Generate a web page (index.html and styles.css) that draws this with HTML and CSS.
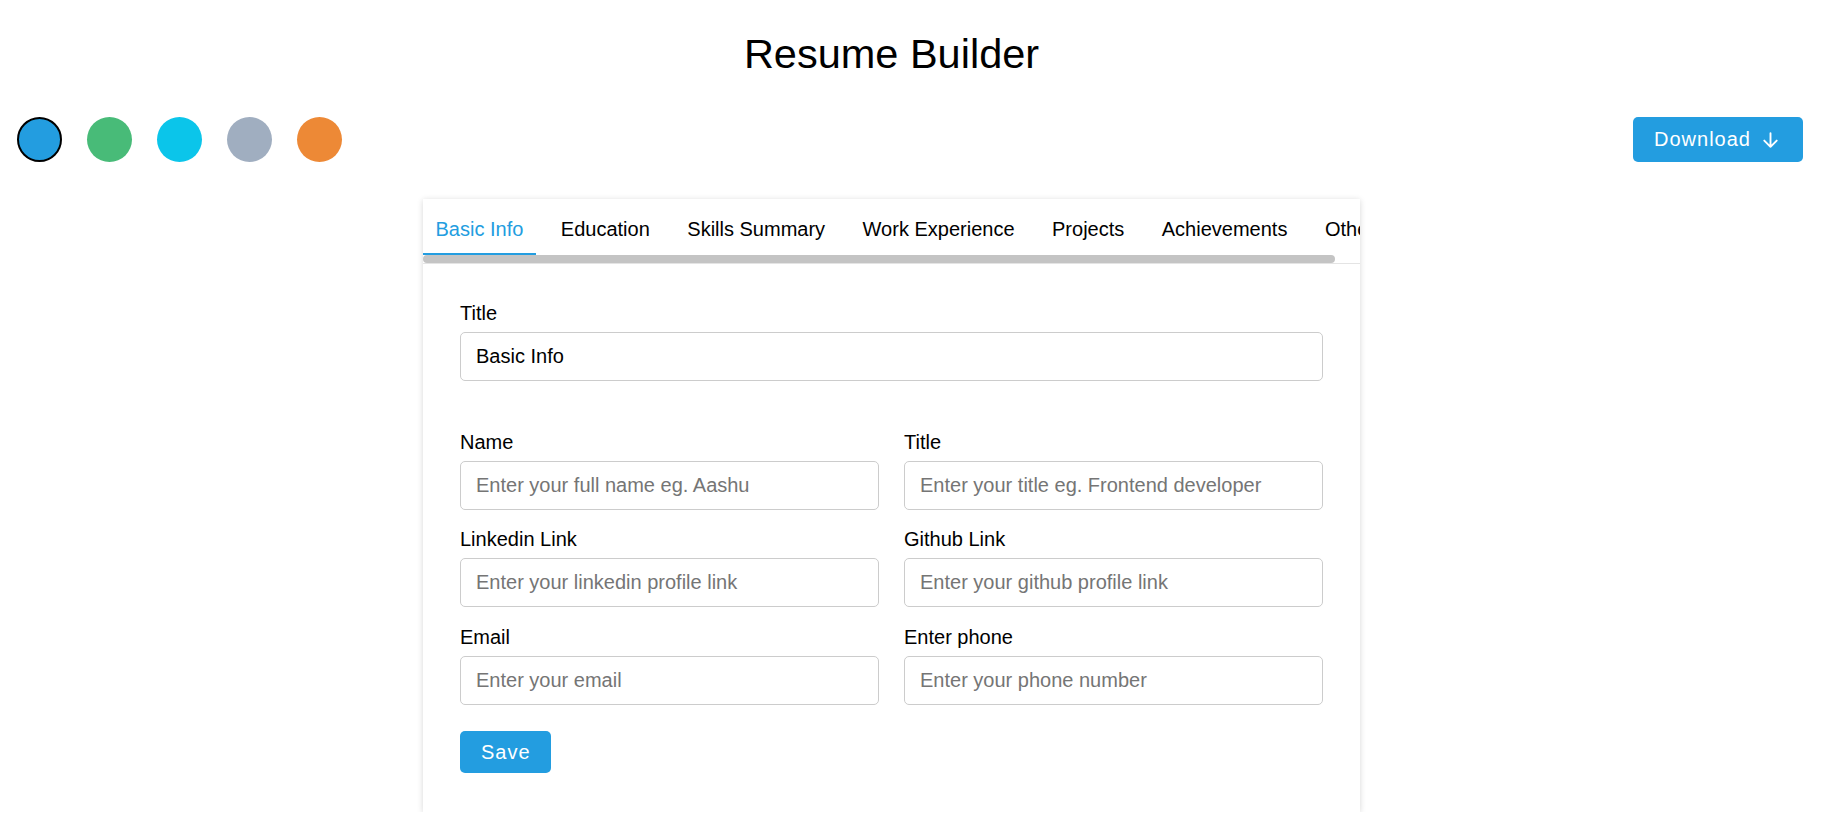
FILE: index.html
```html
<!DOCTYPE html>
<html lang="en">
<head>
<meta charset="utf-8">
<title>Resume Builder</title>
<link rel="stylesheet" href="styles.css">
</head>
<body>
  <h1 class="page-title">Resume Builder</h1>

  <div class="toolbar">
    <div class="swatches">
      <span class="swatch swatch-blue selected"></span>
      <span class="swatch swatch-green"></span>
      <span class="swatch swatch-cyan"></span>
      <span class="swatch swatch-gray"></span>
      <span class="swatch swatch-orange"></span>
    </div>
    <button class="btn btn-download">
      <span>Download</span>
      <svg class="arrow" width="17" height="16" viewBox="0 0 17 16" aria-hidden="true">
        <path d="M8.5 1.2 V14.8 M2.3 8.6 L8.5 14.8 L14.7 8.6" fill="none" stroke="#fff" stroke-width="1.9" stroke-linecap="round" stroke-linejoin="round"/>
      </svg>
    </button>
  </div>

  <div class="card">
    <div class="tabs">
      <div class="tab-list">
        <div class="tab active">Basic Info</div>
        <div class="tab">Education</div>
        <div class="tab">Skills Summary</div>
        <div class="tab">Work Experience</div>
        <div class="tab">Projects</div>
        <div class="tab">Achievements</div>
        <div class="tab">Others</div>
      </div>
      <div class="scroll-track">
        <div class="scroll-thumb"></div>
      </div>
    </div>

    <div class="panel">
      <div class="field section-title">
        <label class="label">Title</label>
        <input class="input" type="text" value="Basic Info">
      </div>

      <div class="grid">
        <div class="field">
          <label class="label">Name</label>
          <input class="input" type="text" placeholder="Enter your full name eg. Aashu">
        </div>
        <div class="field">
          <label class="label">Title</label>
          <input class="input" type="text" placeholder="Enter your title eg. Frontend developer">
        </div>
        <div class="field">
          <label class="label">Linkedin Link</label>
          <input class="input" type="text" placeholder="Enter your linkedin profile link">
        </div>
        <div class="field">
          <label class="label">Github Link</label>
          <input class="input" type="text" placeholder="Enter your github profile link">
        </div>
        <div class="field">
          <label class="label">Email</label>
          <input class="input" type="text" placeholder="Enter your email">
        </div>
        <div class="field">
          <label class="label">Enter phone</label>
          <input class="input" type="text" placeholder="Enter your phone number">
        </div>
      </div>

      <button class="btn btn-save">Save</button>
    </div>
  </div>
</body>
</html>
```

FILE: styles.css
```css
* {
  box-sizing: border-box;
}

html, body {
  margin: 0;
  padding: 0;
  background: #ffffff;
}

body {
  font-family: "Liberation Sans", Arial, sans-serif;
  color: #000000;
}

.page-title {
  margin: 0;
  padding: 31px 45px 0 0;
  font-size: 41.5px;
  line-height: 46px;
  font-weight: 400;
  text-align: center;
}

.toolbar {
  display: flex;
  justify-content: space-between;
  align-items: center;
  margin-top: 40px;
  padding: 0 25px 0 17px;
  height: 45px;
}

.swatches {
  display: flex;
  gap: 25px;
}

.swatch {
  display: block;
  width: 45px;
  height: 45px;
  border-radius: 50%;
}

.swatch.selected {
  border: 2px solid #000000;
}

.swatch-blue { background: #239de0; }
.swatch-green { background: #48bb78; }
.swatch-cyan { background: #0bc5ea; }
.swatch-gray { background: #a0aec0; }
.swatch-orange { background: #ed8936; }

.btn {
  border: none;
  background: #239de0;
  color: #ffffff;
  font-family: "Liberation Sans", Arial, sans-serif;
  font-size: 20px;
  letter-spacing: 1px;
  border-radius: 5px;
  cursor: pointer;
}

.btn-download {
  display: flex;
  align-items: center;
  gap: 11px;
  height: 45px;
  width: 170px;
  padding: 0 0 0 21px;
}

.arrow {
  display: block;
}

.card {
  width: 937px;
  margin: 37px 0 0 423px;
  background: #ffffff;
  box-shadow: 0 1px 6px rgba(0, 0, 0, 0.16);
}

.tabs {
  padding-top: 5px;
  border-bottom: 1px solid #e4e4e4;
}

.tab-list {
  display: flex;
  gap: 12.5px;
  overflow: hidden;
}

.tab {
  flex-shrink: 0;
  white-space: nowrap;
  padding: 12.5px;
  font-size: 20px;
  line-height: 24px;
  border-bottom: 2px solid transparent;
  color: #000000;
}

.tab.active {
  color: #239de0;
  border-bottom-color: #239de0;
}

.scroll-track {
  height: 8px;
}

.scroll-thumb {
  width: 912px;
  height: 8px;
  border-radius: 4px;
  background: #c4c4c4;
}

.panel {
  padding: 37.5px 37px 38.5px 37px;
}

.field {
  display: flex;
  flex-direction: column;
}

.section-title {
  margin-bottom: 50px;
}

.label {
  font-size: 20px;
  line-height: 23px;
  margin-bottom: 7px;
}

.input {
  height: 49px;
  width: 100%;
  border: 1px solid #cccccc;
  border-radius: 5px;
  padding: 0 15px;
  font-family: "Liberation Sans", Arial, sans-serif;
  font-size: 20px;
  color: #000000;
  background: #ffffff;
  outline: none;
}

.input::placeholder {
  color: #757575;
}

.grid {
  display: grid;
  grid-template-columns: 1fr 1fr;
  column-gap: 25px;
  row-gap: 18.5px;
}

.btn-save {
  display: block;
  margin-top: 26.5px;
  height: 42px;
  padding: 0 20px 0 21px;
}
```
